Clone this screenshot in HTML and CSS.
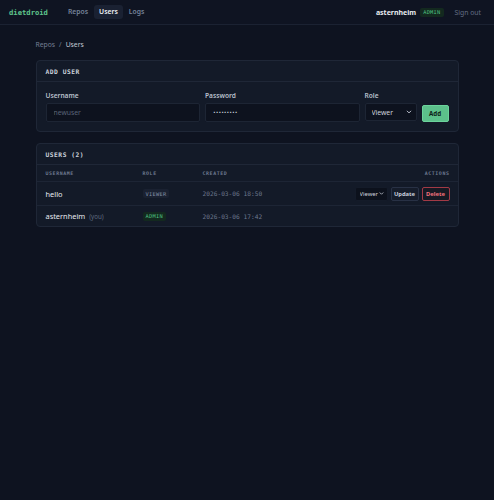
FILE: index.html
```html
<!DOCTYPE html>
<html lang="en">
<head>
<meta charset="utf-8">
<title>dietdroid · Users</title>
<link rel="stylesheet" href="styles.css">
</head>
<body>
<header class="topbar">
  <div class="left">
    <span class="logo">dietdroid</span>
    <nav class="nav">
      <a class="nav-link">Repos</a>
      <a class="nav-link active">Users</a>
      <a class="nav-link">Logs</a>
    </nav>
  </div>
  <div class="right">
    <span class="me">asternheim</span>
    <span class="badge badge-admin">ADMIN</span>
    <a class="signout">Sign out</a>
  </div>
</header>

<main class="main">
  <div class="crumbs"><span class="crumb-link">Repos</span><span class="crumb-sep">/</span><span class="crumb-cur">Users</span></div>

  <section class="card">
    <div class="card-head">ADD USER</div>
    <div class="card-body">
      <div class="form">
        <label class="field">
          <span class="label">Username</span>
          <input class="input" type="text" placeholder="newuser">
        </label>
        <label class="field">
          <span class="label">Password</span>
          <input class="input" type="password" value="secretpw1">
        </label>
        <label class="field">
          <span class="label">Role</span>
          <span class="select select-lg">
            <select><option>Viewer</option><option>Admin</option></select>
            <svg class="chev" viewBox="0 0 10 10" width="6" height="6"><path d="M2 3.5 L5 6.5 L8 3.5" fill="none" stroke="currentColor" stroke-width="1.6" stroke-linecap="round" stroke-linejoin="round"/></svg>
          </span>
        </label>
        <button class="btn btn-add">Add</button>
      </div>
    </div>
  </section>

  <section class="card">
    <div class="card-head">USERS (2)</div>
    <div class="table">
      <div class="tr th">
        <div>USERNAME</div>
        <div>ROLE</div>
        <div>CREATED</div>
        <div class="right-cell">ACTIONS</div>
      </div>
      <div class="tr row">
        <div class="uname">hello</div>
        <div><span class="badge badge-viewer">VIEWER</span></div>
        <div class="date">2026-03-06 18:50</div>
        <div class="actions">
          <span class="select select-sm">
            <select><option>Viewer</option><option>Admin</option></select>
            <svg class="chev" viewBox="0 0 10 10" width="5" height="5"><path d="M2 3.5 L5 6.5 L8 3.5" fill="none" stroke="currentColor" stroke-width="1.6" stroke-linecap="round" stroke-linejoin="round"/></svg>
          </span>
          <button class="btn btn-update">Update</button>
          <button class="btn btn-delete">Delete</button>
        </div>
      </div>
      <div class="tr row last">
        <div class="uname">asternheim <span class="you">(you)</span></div>
        <div><span class="badge badge-admin">ADMIN</span></div>
        <div class="date">2026-03-06 17:42</div>
        <div></div>
      </div>
    </div>
  </section>
</main>
</body>
</html>
```

FILE: styles.css
```css
* { box-sizing: border-box; }
html, body {
  margin: 0;
  padding: 0;
  background: #0e1320;
  color: #d6dbe4;
  font-family: "Noto Sans", "Liberation Sans", sans-serif;
  font-size: 7px;
  min-height: 500px;
}

.topbar {
  height: 25px;
  border-bottom: 1px solid #1b2232;
  background: #0f1422;
  display: flex;
  align-items: center;
  justify-content: space-between;
  padding: 0 13px 0 9px;
}
.left { display: flex; align-items: center; }
.logo {
  font-family: "DejaVu Sans Mono", "Liberation Mono", monospace;
  font-weight: bold;
  font-size: 7.2px;
  color: #5ec48c;
}
.nav { display: flex; align-items: center; gap: 1px; margin-left: 15px; }
.nav-link {
  font-size: 6.8px;
  font-weight: 600;
  color: #76839b;
  padding: 3px 5px;
  border-radius: 3px;
  line-height: 8px;
}
.nav-link.active { background: #1a2132; color: #eef1f6; }
.right { display: flex; align-items: center; }
.me { font-weight: 700; font-size: 7px; color: #e8ebf1; }
.badge {
  font-family: "DejaVu Sans Mono", "Liberation Mono", monospace;
  font-size: 5.3px;
  letter-spacing: 0.3px;
  padding: 1.5px 3px;
  border-radius: 2px;
  line-height: 6px;
  display: inline-block;
}
.badge-admin { background: #13291f; color: #4fc285; }
.badge-viewer { background: #1a2131; color: #8290a8; }
.right .badge { margin-left: 4px; }
.signout { margin-left: 11px; color: #636e84; font-size: 6.8px; }

.main {
  max-width: 423px;
  margin: 0 auto;
  padding-top: 15px;
}
.crumbs { font-size: 6.8px; color: #747f94; height: 9px; line-height: 9px; display: flex; gap: 4px; }
.crumb-cur { color: #c4cad6; }

.card {
  margin-top: 11px;
  background: #131a28;
  border: 1px solid #1f2737;
  border-radius: 4px;
}
.card + .card { margin-top: 11px; }
.card-head {
  font-family: "DejaVu Sans Mono", "Liberation Mono", monospace;
  font-weight: bold;
  font-size: 6.3px;
  letter-spacing: 0.5px;
  color: #ccd2dc;
  height: 21px;
  line-height: 21px;
  padding-left: 9px;
  border-bottom: 1px solid #1f2737;
}
.card-body { padding: 10px 9px 9px 9px; }

.form {
  display: grid;
  grid-template-columns: 1fr 1fr 52px 27px;
  gap: 5px;
  align-items: end;
}
.field { display: flex; flex-direction: column; gap: 3px; }
.label { font-size: 6.6px; font-weight: 600; color: #b9c0cc; line-height: 8px; }
.input {
  height: 19px;
  background: #0d121e;
  border: 1px solid #1d2534;
  border-radius: 2px;
  color: #c8ceda;
  padding: 0 7px;
  font-family: "Noto Sans", sans-serif;
  font-size: 6.8px;
  outline: none;
  width: 100%;
}
.input::placeholder { color: #5a6478; }
.input[type=password] { font-size: 4.6px; letter-spacing: 0; font-family: "DejaVu Sans", sans-serif; }

.select {
  display: flex;
  align-items: center;
  background: #0d121e;
  border: 1px solid #1d2534;
  border-radius: 2px;
  color: #c8ceda;
}
.select select {
  appearance: none;
  -webkit-appearance: none;
  background: transparent;
  border: none;
  outline: none;
  color: #d0d5df;
  font-family: "Noto Sans", sans-serif;
  flex: 1;
  min-width: 0;
  padding: 0;
}
.select-lg { height: 18px; padding: 0 4px 0 6px; margin-bottom: 1px; }
.select-lg select { font-size: 6.8px; }
.select-sm { height: 14px; padding: 0 3px 0 4px; width: 33px; background: #0c111c; border-color: #141b29; }
.select-sm select { font-size: 5.8px; }
.chev { flex: none; color: #c4cad6; }

.btn {
  font-family: "Noto Sans", sans-serif;
  font-weight: 700;
  border-radius: 2px;
  cursor: pointer;
  padding: 0;
}
.btn-add {
  height: 17px;
  background: #5cc08b;
  border: 1px solid #6bd39c;
  color: #0d2217;
  font-size: 6.2px;
}

.table { font-size: 7px; }
.tr {
  display: grid;
  grid-template-columns: 97px 60px 1fr auto;
  align-items: center;
  padding: 0 8px 0 9px;
  border-bottom: 1px solid #1d2535;
}
.tr.last { border-bottom: none; }
.th {
  height: 17px;
  font-family: "DejaVu Sans Mono", "Liberation Mono", monospace;
  font-weight: bold;
  font-size: 4.9px;
  letter-spacing: 0.6px;
  color: #6f7b92;
}
.right-cell { text-align: right; }
.row { height: 24px; }
.row.last { height: 20px; }
.uname { color: #e6e9ef; font-size: 7.4px; }
.you { color: #5f6a7f; font-size: 6.2px; margin-left: 2px; }
.date {
  font-family: "DejaVu Sans Mono", "Liberation Mono", monospace;
  font-size: 6.2px;
  color: #6b778c;
}
.actions { display: flex; align-items: center; gap: 3px; }
.btn-update {
  height: 14px;
  width: 28px;
  background: #151c2a;
  border: 1px solid #283145;
  color: #c8ceda;
  font-size: 5.8px;
}
.btn-delete {
  height: 14px;
  width: 28px;
  background: #161923;
  border: 1px solid #a23a46;
  color: #f0707b;
  font-size: 5.8px;
}
```
